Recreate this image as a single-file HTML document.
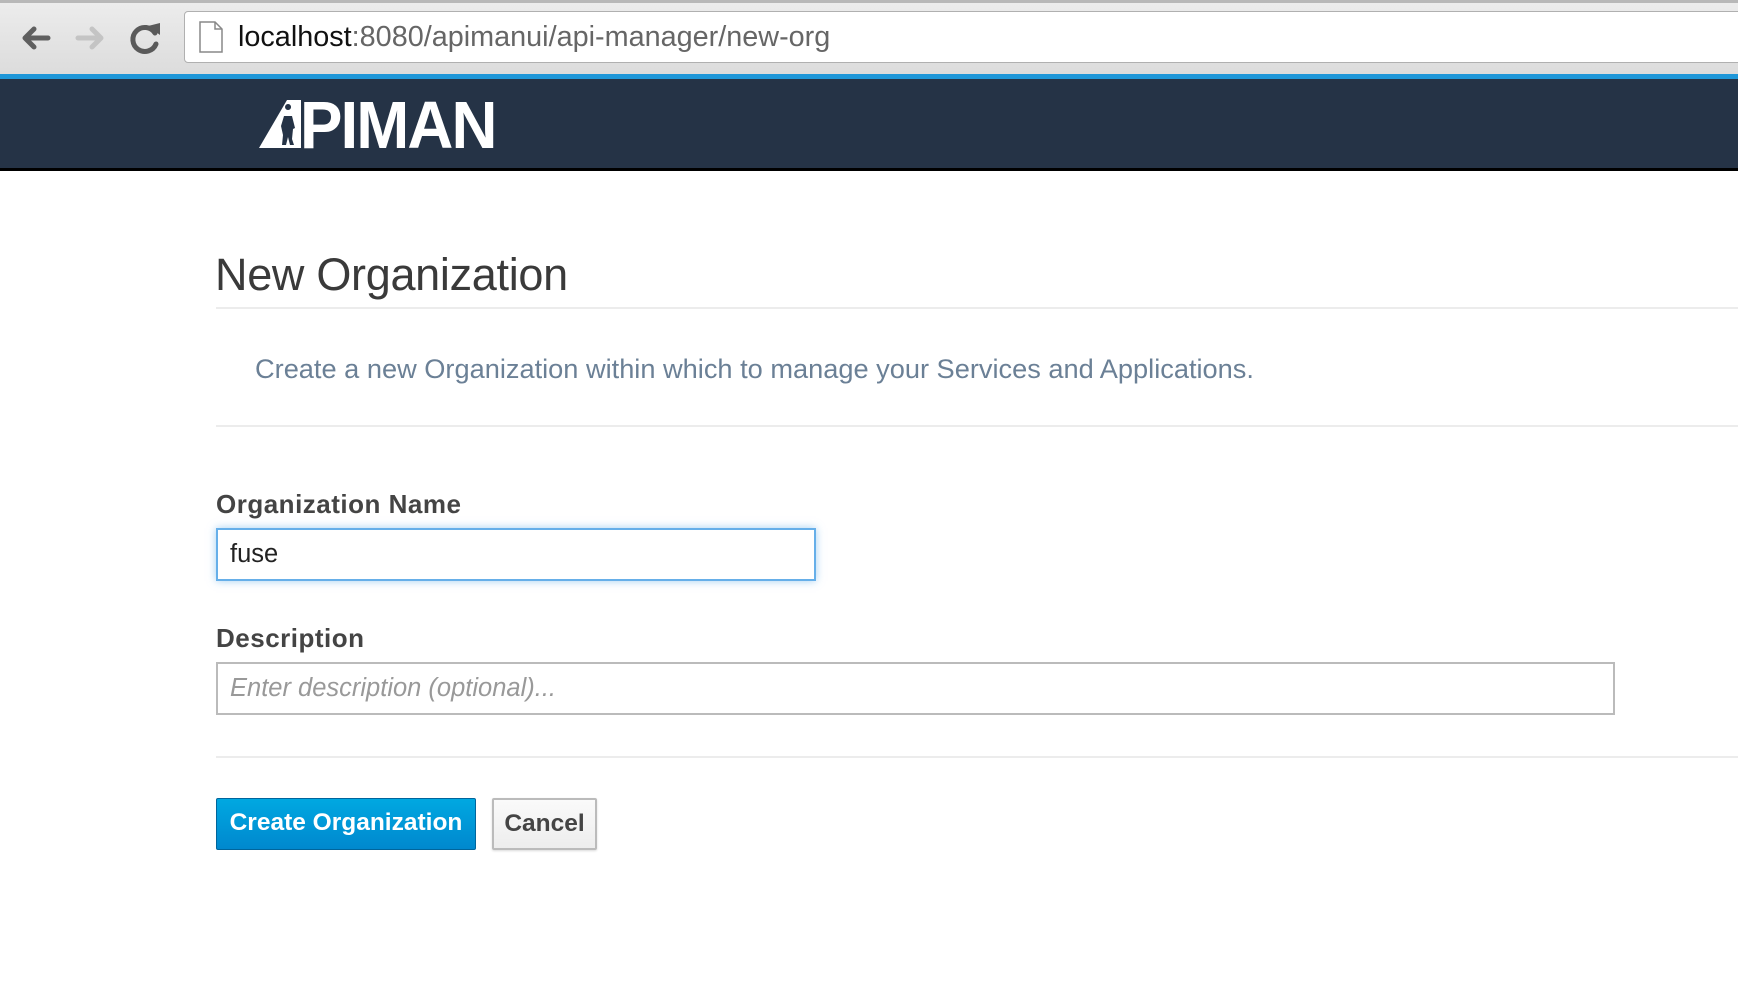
<!DOCTYPE html>
<html><head><meta charset="utf-8"><style>
*{margin:0;padding:0;box-sizing:border-box}
body{width:1738px;height:1004px;overflow:hidden;background:#fff;font-family:"Liberation Sans",sans-serif;position:relative}
.abs{position:absolute}
.toolbar{left:0;top:0;width:1738px;height:74px;background:linear-gradient(#ececec,#dcdcdc);border-top:3px solid #b8b8b8}
.addr{left:184px;top:11px;width:1560px;height:52px;background:#fff;border:1px solid #b0b0b0;border-radius:4px}
.url{left:238px;top:21px;font-size:28.8px;color:#666;font-family:"Liberation Sans",sans-serif;white-space:nowrap}
.url b{font-weight:normal;color:#111}
.blue{left:0;top:74px;width:1738px;height:5px;background:#1e97d9}
.nav{left:0;top:79px;width:1738px;height:89px;background:#253346}
.blk{left:0;top:168px;width:1738px;height:3px;background:#000}
h1{position:absolute;left:215px;top:249px;font-size:45px;font-weight:300;color:#3a3a3a;letter-spacing:-0.3px;white-space:nowrap}
.hr{height:2px;background:#ececec;left:216px;width:1522px}
.p{left:255px;top:353px;font-size:27.2px;color:#6b8096;white-space:nowrap}
.lbl{font-size:26px;font-weight:bold;color:#444;left:216px;letter-spacing:0.5px}
.inp{left:216px;border:2px solid #bbb;background:#fff;font-size:25.5px;padding-left:12px;line-height:49px}
.btn{border-radius:2px;font-size:24.5px;font-weight:bold;text-align:center;line-height:48px}
</style></head><body>
<div class="abs toolbar"></div>
<svg class="abs" style="left:0;top:0" width="184" height="74">
<g stroke-linecap="round" stroke-linejoin="round" fill="none">
<path d="M48 38H25M34 29l-9 9 9 9" stroke="#5f5f5f" stroke-width="5"/>
<path d="M78 38h23M92 29l9 9-9 9" stroke="#c4c4c4" stroke-width="5"/>
<path d="M155 33a12 12 0 1 0 1 11" stroke="#5a5a5a" stroke-width="5"/>
</g>
<path d="M148 26l12-3 0 12z" fill="#5a5a5a"/>
</svg>
<div class="abs addr"></div>
<svg class="abs" style="left:198px;top:21px" width="26" height="33"><path d="M2 1h15l7 7v23H2z" fill="#fff" stroke="#888" stroke-width="1.5"/><path d="M17 1v7h7" fill="none" stroke="#888" stroke-width="1.5"/></svg>
<div class="abs url"><b>localhost</b>:8080/apimanui/api-manager/new-org</div>
<div class="abs blue"></div>
<div class="abs nav"></div>
<svg class="abs" style="left:255px;top:96px" width="260" height="56">
<polygon points="4,52 32,4 46,4 46,52" fill="#fff"/>
<path d="M33 14a3 3 0 1 1 0.1 0M29 20h8l3 12-2 1-1 10 2 6h-4l-2-8-2 8h-4l1-10-2-9z" fill="#253346"/>
<text x="45" y="52" fill="#fff" font-family="Liberation Sans" font-weight="bold" font-size="67" transform="translate(45 0) scale(0.95 1) translate(-45 0)" letter-spacing="-2">PIMAN</text>
</svg>
<div class="abs blk"></div>
<h1>New Organization</h1>
<div class="abs hr" style="top:307px"></div>
<div class="abs p">Create a new Organization within which to manage your Services and Applications.</div>
<div class="abs hr" style="top:425px"></div>
<div class="abs lbl" style="top:489px">Organization Name</div>
<div class="abs inp" style="top:528px;width:600px;height:53px;border-color:#66afe9;box-shadow:0 0 8px rgba(102,175,233,.6);color:#222">fuse</div>
<div class="abs lbl" style="top:623px">Description</div>
<div class="abs inp" style="top:662px;width:1399px;height:53px;color:#999;font-style:italic">Enter description (optional)...</div>
<div class="abs hr" style="top:756px"></div>
<div class="abs btn" style="left:216px;top:798px;width:260px;height:52px;background:linear-gradient(#00a8e1,#0088ce);border:1px solid #00659c;color:#fff">Create Organization</div>
<div class="abs btn" style="left:492px;top:798px;width:105px;height:52px;background:linear-gradient(#fafafa,#ededed);border:2px solid #bbb;color:#444;box-shadow:0 1px 2px rgba(0,0,0,.15)">Cancel</div>
</body></html>
